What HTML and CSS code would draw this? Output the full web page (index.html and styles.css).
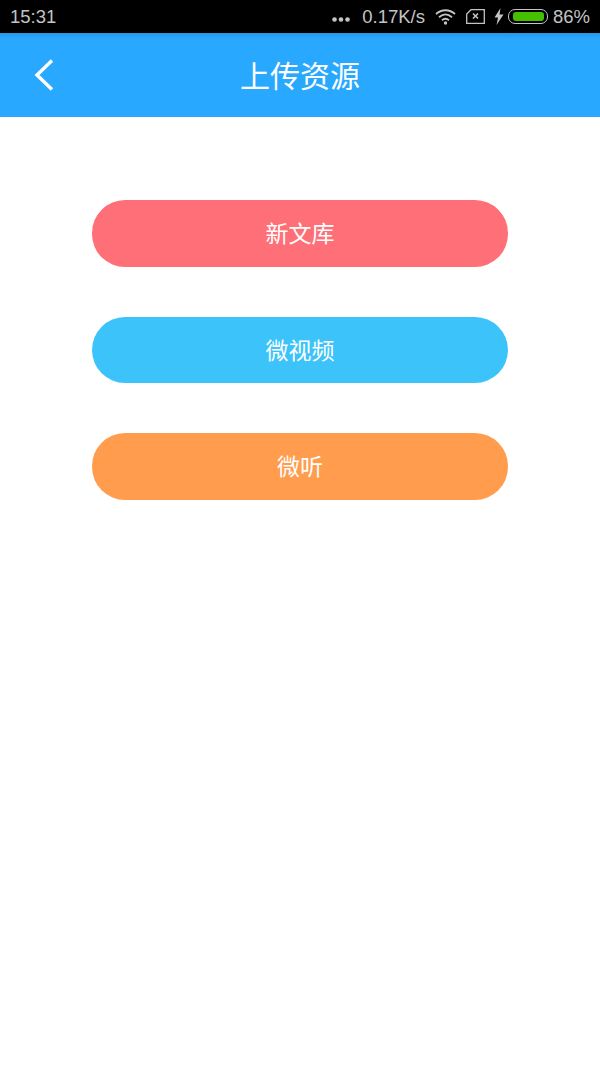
FILE: index.html
```html
<!DOCTYPE html>
<html lang="zh-CN">
<head>
    <meta charset="UTF-8">
    <meta name="viewport" content="width=device-width, initial-scale=1.0">
    <title>上传资源</title>
    <link rel="stylesheet" href="styles.css">
</head>
<body>

<div class="statusbar">
    <span class="time">15:31</span>
    <div class="status-right">
        <svg class="dots" width="18" height="5" viewBox="0 0 18 5"><circle cx="2.5" cy="2.5" r="2.3"/><circle cx="9" cy="2.5" r="2.3"/><circle cx="15.5" cy="2.5" r="2.3"/></svg>
        <span class="speed">0.17K/s</span>
        <svg class="wifi" width="21" height="16" viewBox="0 0 21 16">
            <path d="M1 5 C6.5 0 14.5 0 20 5 M4 8.2 C8 4.8 13 4.8 17 8.2 M7 11.2 C9.2 9.4 11.8 9.4 14 11.2" fill="none" stroke="#c4c4c4" stroke-width="1.8"/>
            <circle cx="10.5" cy="14" r="1.7" fill="#c4c4c4"/>
        </svg>
        <svg class="sim" width="19" height="15" viewBox="0 0 19 15">
            <path d="M5 .7 H18.3 V14.3 H.7 V5 Z" fill="none" stroke="#c4c4c4" stroke-width="1.3"/>
            <path d="M7 4.5 L12 9.5 M12 4.5 L7 9.5" stroke="#c4c4c4" stroke-width="1.6"/>
        </svg>
        <svg class="bolt" width="10" height="17" viewBox="0 0 10 17"><path d="M6.5 0 L0.5 9.5 H4 L2.5 17 L9.5 6.5 H5.5 Z" fill="#c4c4c4"/></svg>
        <div class="battery"><div class="battery-fill"></div></div>
        <span class="percent">86%</span>
    </div>
</div>

<div class="header">
    <a class="back">
        <svg width="22" height="34" viewBox="0 0 22 34"><path d="M19 2.5 L4 17 L19 31.5" fill="none" stroke="#ffffff" stroke-width="3.4"/></svg>
    </a>
    <h1>上传资源</h1>
</div>

<div class="buttons">
    <button class="btn btn-red">新文库</button>
    <button class="btn btn-blue">微视频</button>
    <button class="btn btn-orange">微听</button>
</div>

</body>
</html>
```

FILE: styles.css
```css
body {
    margin: 0;
    background-color: #ffffff;
    font-family: "Noto Sans CJK SC", "Liberation Sans", sans-serif;
}
.statusbar {
    height: 33px;
    background-color: #000000;
    color: #c4c4c4;
    display: flex;
    align-items: center;
    justify-content: space-between;
    padding: 0 10px;
    font-family: "Liberation Sans", Arial, sans-serif;
    font-size: 18.5px;
}
.status-right {
    display: flex;
    align-items: center;
}
.dots {
    fill: #c4c4c4;
    margin: 6px 12px 0 0;
}
.wifi {
    margin-left: 10px;
}
.sim {
    margin-left: 10px;
}
.bolt {
    margin-left: 9px;
}
.battery {
    width: 40px;
    height: 15px;
    margin-left: 4px;
    border: 1px solid #c4c4c4;
    border-radius: 7px;
    box-sizing: border-box;
    padding: 2px 1px 2px 4px;
}
.battery-fill {
    width: 94%;
    height: 100%;
    background-color: #44c000;
    border-radius: 3px;
}
.percent {
    margin-left: 5px;
}
.header {
    height: 84px;
    background: linear-gradient(#2598e4, #28a8ff 6px);
    box-sizing: border-box;
    padding-bottom: 2px;
    position: relative;
    display: flex;
    align-items: center;
    justify-content: center;
}
.header h1 {
    margin: 0;
    color: #ffffff;
    font-size: 30px;
    font-weight: 400;
}
.back {
    position: absolute;
    left: 33px;
    top: 25px;
    line-height: 0;
}
.buttons {
    display: flex;
    flex-direction: column;
    align-items: center;
    gap: 50px;
    padding-top: 83px;
}
.btn {
    width: 416px;
    height: 66.5px;
    border: none;
    border-radius: 33px;
    color: #ffffff;
    font-family: inherit;
    font-size: 23px;
    padding: 0 0 2px;
}
.btn-red {
    background-color: #ff6f77;
}
.btn-blue {
    background-color: #3bc3fa;
}
.btn-orange {
    background-color: #ff9c4e;
}
```
